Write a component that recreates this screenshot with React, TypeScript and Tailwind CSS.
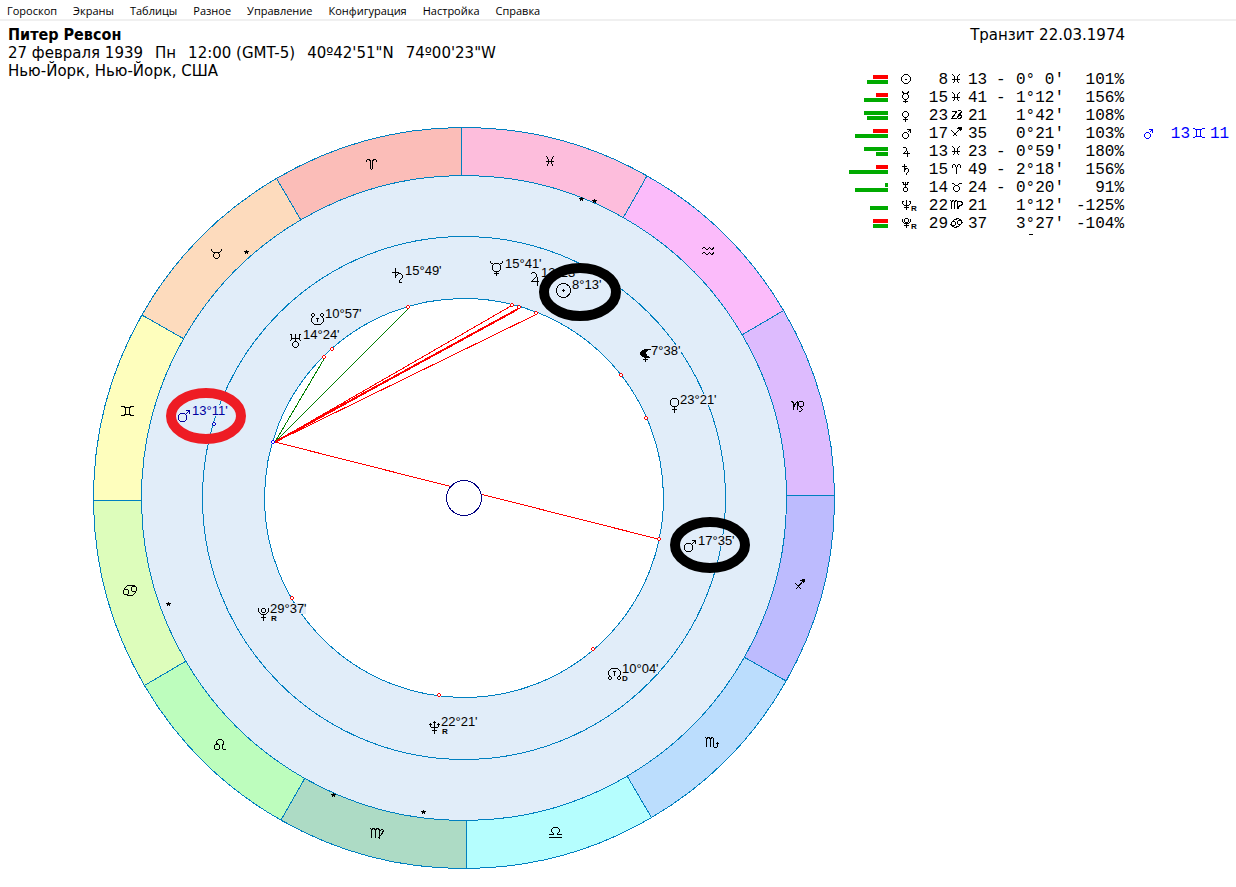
import type { ReactNode } from "react";

const MENU = ["Гороскоп", "Экраны", "Таблицы", "Разное", "Управление", "Конфигурация", "Настройка", "Справка"];

const CX = 464;
const CY = 498;
const R_OUTER = 370.5;
const R_SIGNS = 322.5;
const R_TRANSIT = 261.5;
const R_NATAL = 199.5;
// angle of the Pisces / Aries boundary
const ARIES_START = 90.4;

// eight-sided ring, keeps small glyph circles closed on the pixel grid
function ring(cx: number, cy: number, r: number) {
  const cut = Math.max(1, Math.round(r * 0.55));
  const c = r - cut;
  return `M${cx - c} ${cy - r}h${2 * c}l${cut} ${cut}v${2 * c}l${-cut} ${cut}h${-2 * c}l${-cut} ${-cut}v${-2 * c}Z`;
}

function polar(radius: number, degrees: number) {
  const a = (degrees * Math.PI) / 180;
  return `${(CX + radius * Math.cos(a)).toFixed(2)} ${(CY - radius * Math.sin(a)).toFixed(2)}`;
}

function sectorPath(index: number) {
  const from = ARIES_START + index * 30;
  const to = from + 30;
  return [
    `M${polar(R_OUTER, from)}`,
    `A${R_OUTER} ${R_OUTER} 0 0 0 ${polar(R_OUTER, to)}`,
    `L${polar(R_SIGNS, to)}`,
    `A${R_SIGNS} ${R_SIGNS} 0 0 1 ${polar(R_SIGNS, from)}Z`,
  ].join("");
}

const SECTORS = [
  { id: "aries", fill: "#fbbdb8", x: 366, y: 159, d: "M.5 3V1.5L1.5.5H3.5L4.5 2.5V9.5L5.5 10.5L6.5 9.5V2.5L7.5.5H9.5L10.5 1.5V3" },
  { id: "taurus", fill: "#fddbbd", x: 211, y: 249, d: `M.5 0V1.5L2.5 3.5H8.5L10.5 1.5V0${ring(5.5, 6.5, 3)}` },
  { id: "gemini", fill: "#fefebd", x: 121, y: 406, d: "M0 .5H2.5L4.5 1.5H8.5L10.5.5H13M0 9.5H2.5L4.5 8.5H8.5L10.5 9.5H13M4.5 1.5V8.5M8.5 1.5V8.5" },
  { id: "cancer", fill: "#ddfdbb", x: 123, y: 585, d: `${ring(3, 7, 2.5)}${ring(11, 4, 2.5)}M1.5 4.5V3.5L4.5.5H11.5M12.5 6.5V7.5L9.5 10.5H3.5` },
  { id: "leo", fill: "#bdfdbd", x: 214, y: 739, d: `${ring(3, 8, 2.5)}M4.5 5.5L2.5 4.5V2.5L4.5.5H7.5L9.5 2.5V4.5L8.5 6.5V9.5L9.5 10.5H12` },
  { id: "virgo", fill: "#addbc5", x: 370, y: 828, d: "M.5.5L1.5 1.5V10M1.5 1.5L3.5.5L5.5 1.5V10M5.5 1.5L7.5.5L9.5 1.5V11M9.5 3.5L11.5 1.5H12.5L13.5 2.5L11.5 6.5L7.5 10.5" },
  { id: "libra", fill: "#b5fefe", x: 549, y: 827, d: "M0 10.5H13M0 7.5H4.5V6.5L2.5 4.5V2.5L4.5.5H8.5L10.5 2.5V4.5L8.5 6.5V7.5H13" },
  { id: "scorpio", fill: "#bbddfd", x: 705, y: 737, d: "M.5.5L1.5 1.5V10M1.5 1.5L3.5.5L5.5 1.5V10M5.5 1.5L7.5.5L8.5 1.5V9.5L9.5 10.5H11.5L12.5 9.5V6M10.5 7.5L12.5 5.5L14.5 7.5" },
  { id: "sagittarius", fill: "#bdbbfe", x: 794, y: 579, d: "M1.5 10.5L10.5.5M1.5 4.5L7.5 10.5M6.5 1.5L10.5.5L9.5 4.5M7.5 1.5L9.5 3.5M8.5.5L10.5 2.5" },
  { id: "capricorn", fill: "#ddbbfe", x: 791, y: 401, d: `M0 .5H1.5L2.5 2.5V9M2.5 6.5L4.5 2.5L6.5.5V9${ring(10, 3, 2.5)}M8.5 5.5L11.5 8.5L9.5 10.5H8` },
  { id: "aquarius", fill: "#fbbbfa", x: 701, y: 247, d: "M.5 2.5L2.5.5H3.5L5.5 2.5H6.5L8.5.5L10.5 2.5H11.5L12.5.5M.5 7.5L2.5 5.5H3.5L5.5 7.5H6.5L8.5 5.5L10.5 7.5H11.5L12.5 5.5" },
  { id: "pisces", fill: "#fdbddc", x: 546, y: 156, d: "M.5.5L2.5 3.5V7.5L.5 10.5M7.5.5L5.5 3.5V7.5L7.5 10.5M0 5.5H8" },
];

const MARS = `${ring(4.5, 7.5, 4)}M7.5 4.5L11.5.5M8 .5H12M11.5 0V4`;

type Body = {
  name: string;
  x: number;
  y: number;
  d: string;
  solid?: string;
  label: string;
  lx: number;
  ly: number;
  mark?: string;
  mx?: number;
  my?: number;
  color?: string;
};

const BODIES: Body[] = [
  { name: "saturn", x: 392, y: 268, d: "M3.5 0V10M0 4.5H7M3.5 8.5L6.5 5.5H8.5L10.5 7.5V9.5L7.5 12.5V14.5H9.5", label: "15°49'", lx: 405, ly: 275 },
  { name: "south node", x: 311, y: 313, d: `${ring(2, 2, 1.5)}${ring(11, 2, 1.5)}M2.5 3.5L.5 5.5V8.5L3.5 11.5H9.5L12.5 8.5V5.5L10.5 3.5M5 5.5H8M6.5 5V9`, label: "10°57'", lx: 325, ly: 318 },
  { name: "uranus", x: 290, y: 334, d: `M0 .5H1.5V5.5L0 6.5M11 .5H9.5V5.5L11 6.5M1.5 4.5H9.5M5.5 0V8${ring(5.5, 10.5, 3)}`, label: "14°24'", lx: 303, ly: 339 },
  { name: "mercury", x: 490, y: 261, d: `M.5 0V1.5L3.5 3.5M12.5 0V1.5L9.5 3.5${ring(6.5, 6.5, 4)}M6.5 10.5V15M4 12.5H9`, label: "15°41'", lx: 505, ly: 268 },
  { name: "jupiter", x: 530, y: 272, d: "M.5 2.5L2.5.5H4.5L6.5 2.5V4.5L1.5 9.5H9M7.5 4.5V13.5", label: "13°23'", lx: 541, ly: 277 },
  { name: "sun", x: 556, y: 283, d: "M.5 7.5a7 7 0 1 0 14 0a7 7 0 1 0-14 0M6 7.5H9M7.5 6V9", label: "8°13'", lx: 572, ly: 289 },
  { name: "lilith", x: 640, y: 348, d: "M5.5 9V14M3 11.5H8", solid: "M10.5.5H5L2 2.5L0 4V7L4 9.5L9.5 10V9L7 7.5L6 5L7.5 2.5L10.5 1.5Z", label: "7°38'", lx: 651, ly: 355 },
  { name: "venus", x: 670, y: 398, d: `${ring(4.5, 4.5, 4)}M4.5 8.5V15M2 11.5H7`, label: "23°21'", lx: 680, ly: 404 },
  { name: "transit mars", x: 178, y: 410, d: MARS, label: "13°11'", lx: 192, ly: 415, color: "#0000a0" },
  { name: "mars", x: 684, y: 540, d: MARS, label: "17°35'", lx: 698, ly: 545 },
  { name: "neptune", x: 429, y: 721, d: "M1.5 2V5.5L2.5 6.5H8.5L9.5 5.5V2M5.5 0V13M3 9.5H8M4 1.5H7M0 3.5H3M8 3.5H11", label: "22°21'", lx: 441, ly: 726, mark: "R", mx: 442, my: 734 },
  { name: "pluto", x: 258, y: 607, d: `${ring(5.5, 3.5, 2)}M.5 1V4.5L3.5 7.5H7.5L10.5 4.5V1M5.5 7.5V14M3 10.5H8`, label: "29°37'", lx: 270, ly: 613, mark: "R", mx: 271, my: 621 },
  { name: "north node", x: 608, y: 668, d: `${ring(2, 10, 1.5)}${ring(11, 10, 1.5)}M2.5 8.5L.5 6.5V3.5L3.5.5H9.5L12.5 3.5V6.5L10.5 8.5M5 3.5H8M6.5 3V8`, label: "10°04'", lx: 622, ly: 673, mark: "D", mx: 622, my: 681 },
];

const POINTS = [
  [408, 307], [332, 349], [324, 357], [512, 305], [519, 307], [536, 313],
  [621, 375], [646, 418], [659, 539], [593, 649], [439, 695], [292, 598],
];

const ASPECTS = [
  { x: 324, y: 359, color: "#008000", width: 1 },
  { x: 408, y: 309, color: "#008000", width: 1 },
  { x: 511, y: 306, color: "#ff0000", width: 1 },
  { x: 518, y: 309, color: "#ff0000", width: 2 },
  { x: 535, y: 315, color: "#ff0000", width: 1 },
  { x: 658, y: 539, color: "#ff0000", width: 1 },
];

const STARS = [[246, 252], [581, 199], [594, 201], [168, 604], [333, 795], [423, 812]];

function Marker({ x, y, stroke, fill = "#fff" }: { x: number; y: number; stroke: string; fill?: string }) {
  return (
    <g transform={`translate(${x} ${y})`}>
      <rect x={-1} y={-1} width={2} height={2} fill={fill} />
      <path d="M-1-1.5H1M-1 1.5H1M-1.5-1V1M1.5-1V1" stroke={stroke} />
    </g>
  );
}

function NatalChart() {
  return (
    <svg
      className="block h-auto w-full"
      viewBox="0 80 840 800"
      role="img"
      aria-label="Натальная карта"
      fill="none"
      shapeRendering="crispEdges"
    >
      <circle cx={CX} cy={CY} r={R_SIGNS} fill="#e1edf9" />
      {SECTORS.map((sector, i) => (
        <path key={sector.id} d={sectorPath(i)} fill={sector.fill} stroke="#0080c0" />
      ))}
      <circle cx={CX} cy={CY} r={R_TRANSIT} stroke="#0080c0" />
      <circle cx={CX} cy={CY} r={R_NATAL} fill="#fff" stroke="#0080c0" />

      {ASPECTS.map((a) => (
        <line key={a.x} x1={275} y1={442} x2={a.x} y2={a.y} stroke={a.color} strokeWidth={a.width} />
      ))}
      <circle cx={CX} cy={CY} r={17.5} fill="#fff" stroke="#000080" />

      {SECTORS.map((s) => (
        <path key={s.id} d={s.d} transform={`translate(${s.x} ${s.y})`} stroke="#000" />
      ))}
      {STARS.map(([x, y]) => (
        <path key={x} d="M.5-2V1M-2-.5H3M.5 0L-1.5 2.5M.5 0L2.5 2.5" transform={`translate(${x} ${y})`} stroke="#000" />
      ))}

      {BODIES.map((b) => (
        <g key={b.name}>
          <rect x={b.lx} y={b.ly - 10} width={b.label.length * 6} height={11} fill="#e1edf9" />
          <path d={b.d} transform={`translate(${b.x} ${b.y})`} stroke={b.color ?? "#000"} />
          {b.solid && <path d={b.solid} transform={`translate(${b.x} ${b.y})`} fill="#000" />}
          <text className="font-['Liberation_Sans',sans-serif] text-[13px]" x={b.lx} y={b.ly} fill={b.color ?? "#000"}>
            {b.label}
          </text>
          {b.mark && (
            <text className="font-['Liberation_Sans',sans-serif] text-[8px] font-bold" x={b.mx} y={b.my} fill="#000">
              {b.mark}
            </text>
          )}
        </g>
      ))}

      {POINTS.map(([x, y]) => (
        <Marker key={x} x={x} y={y} stroke="#ff0000" />
      ))}
      <Marker x={273} y={442} stroke="#0000ff" />
      <Marker x={214} y={424} stroke="#0000c0" fill="#e1edf9" />

      <g strokeWidth={10} shapeRendering="auto">
        <ellipse cx={580} cy={292} rx={36} ry={24} stroke="#000" />
        <ellipse cx={710} cy={545} rx={35} ry={23} stroke="#000" />
        <ellipse cx={206} cy={416} rx={35} ry={23} stroke="#ee1c24" />
      </g>
    </svg>
  );
}

// compact glyphs for the table, drawn in a 14x12 box
const SMALL: Record<string, string> = {
  sun: "M5.5 1.5H8.5L11.5 4.5V7.5L8.5 10.5H5.5L2.5 7.5V4.5ZM6 6.5H8",
  mercury: `M3.5 0V1.5L5.5 2.5H7.5L9.5 1.5V0${ring(6.5, 5.5, 3)}M6.5 8.5V12M4 10.5H9`,
  venus: `${ring(6.5, 5.5, 3)}M6.5 8.5V13M4 10.5H9`,
  mars: `${ring(6.5, 8.5, 3)}M8.5 5.5L11.5 2.5M8 2.5H12M11.5 2V6`,
  jupiter: "M3.5 3.5L4.5 2.5H6.5L7.5 3.5V5.5L4.5 8.5H11M8.5 6V12",
  saturn: "M5.5 1V9M3 3.5H8M5.5 6.5L7.5 5.5H8.5L9.5 6.5V8.5L7.5 10.5V12",
  uranus: `M3 1.5H5M8 1.5H10M4.5 1V4M8.5 1V4M4 3.5H9M6.5 1V6${ring(6.5, 8.5, 2)}`,
  neptune: "M3 2.5H5M10 2.5H12M3.5 2V4.5L5.5 6.5H9.5L11.5 4.5V2M7.5 1V11M5 8.5H10",
  pluto: `${ring(7.5, 3.5, 2)}M3.5 2V4.5L5.5 6.5H9.5L11.5 4.5V2M7.5 6.5V11M5 8.5H10`,
  pisces: "M3.5 1.5L5.5 3.5V8.5L3.5 10.5M10.5 1.5L8.5 3.5V8.5L10.5 10.5M3 6.5H11",
  capricorn: "M3 2.5H7.5L6.5 4.5L2.5 9.5H7.5L12.5 3.5M8.5 2.5L9.5 1.5H11.5L12.5 2.5L9.5 5.5H11.5L12.5 7.5L11.5 9.5H8.5",
  sagittarius: "M3.5 9.5L12.5.5M2.5 3.5L8.5 9.5M8.5 1.5L12.5.5L11.5 4.5M9.5.5L12.5 3.5",
  aries: "M3.5 4.5V2.5L4.5 1.5H5.5L7.5 4.5V11M11.5 4.5V2.5L10.5 1.5H9.5L7.5 4.5",
  taurus: `M2.5 2.5H4.5L6.5 4.5H8.5L10.5 2.5H12.5${ring(7.5, 7.5, 3)}`,
  virgo: "M1.5 1.5L2.5 2.5V10M2.5 2.5L4.5 1.5L5.5 2.5V10M5.5 2.5L7.5 1.5L8.5 2.5V10M8.5 2.5H12.5L13.5 4.5L12.5 6.5H10.5L8.5 10.5",
  cancer: `${ring(4.5, 6.5, 2)}${ring(10.5, 5.5, 2)}M1.5 6.5L5.5 2.5L9.5 1.5L13.5 4.5M13.5 5.5L9.5 9.5L5.5 10.5L1.5 7.5`,
  gemini: "M1.5 1.5H3.5L4.5 2.5H10.5L11.5 1.5H13.5M1.5 10.5H3.5L4.5 9.5H10.5L11.5 10.5H13.5M5.5 2.5V9.5M9.5 2.5V9.5",
};

function SmallGlyph({ id, retrograde }: { id: string; retrograde?: boolean }) {
  return (
    <svg className="block h-3 w-5" viewBox="0 0 20 12" overflow="visible" fill="none" shapeRendering="crispEdges" aria-hidden="true">
      <path d={SMALL[id]} stroke="currentColor" />
      {retrograde && (
        <text className="font-['Liberation_Sans',sans-serif] text-[8px] font-bold" x={12} y={12} fill="currentColor">
          R
        </text>
      )}
    </svg>
  );
}

const ROWS = [
  { planet: "sun", deg: "8", sign: "pisces", min: "13", dir: "-", speed: "0° 0'", pct: "101%", top: -15, bottom: 21 },
  { planet: "mercury", deg: "15", sign: "pisces", min: "41", dir: "-", speed: "1°12'", pct: "156%", top: -12, bottom: 24 },
  { planet: "venus", deg: "23", sign: "capricorn", min: "21", dir: "", speed: "1°42'", pct: "108%", top: 24, bottom: 21 },
  { planet: "mars", deg: "17", sign: "sagittarius", min: "35", dir: "", speed: "0°21'", pct: "103%", top: -15, bottom: 33, transit: { deg: "13", sign: "gemini", min: "11" } },
  { planet: "jupiter", deg: "13", sign: "pisces", min: "23", dir: "-", speed: "0°59'", pct: "180%", top: 24, bottom: 12 },
  { planet: "saturn", deg: "15", sign: "aries", min: "49", dir: "-", speed: "2°18'", pct: "156%", top: -12, bottom: 39 },
  { planet: "uranus", deg: "14", sign: "taurus", min: "24", dir: "-", speed: "0°20'", pct: "91%", top: 3, bottom: 33 },
  { planet: "neptune", deg: "22", sign: "virgo", min: "21", dir: "", speed: "1°12'", pct: "-125%", top: 0, bottom: 18, retrograde: true },
  { planet: "pluto", deg: "29", sign: "cancer", min: "37", dir: "", speed: "3°27'", pct: "-104%", top: -15, bottom: 15, retrograde: true },
];

function Cell({ className = "", children }: { className?: string; children?: ReactNode }) {
  return <td className={`h-[18px] p-0 ${className}`}>{children}</td>;
}

function TextCell({ className = "", children }: { className?: string; children?: ReactNode }) {
  return <td className={`h-[18px] pt-0.5 leading-4 ${className}`}>{children}</td>;
}

function Strength({ top, bottom }: { top: number; bottom: number }) {
  return (
    <div className="flex flex-col items-end gap-px">
      <div className={`h-1 ${top < 0 ? "bg-[#ff0000]" : "bg-[#00aa00]"}`} style={{ width: Math.abs(top) }} />
      <div className="h-1 bg-[#00aa00]" style={{ width: bottom }} />
    </div>
  );
}

function PositionsTable() {
  return (
    <table className="ml-2 w-[384px] table-fixed border-collapse font-['Liberation_Mono',monospace] text-[16px]">
      <colgroup>
        <col className="w-10" />
        <col className="w-9" />
        <col className="w-6" />
        <col className="w-[19px]" />
        <col className="w-[25px]" />
        <col className="w-6" />
        <col className="w-[54px]" />
        <col className="w-[54px]" />
        <col className="w-[42px]" />
        <col className="w-6" />
        <col className="w-[19px]" />
        <col />
      </colgroup>
      <tbody>
        {ROWS.map((row) => (
          <tr key={row.planet}>
            <Cell>
              <Strength top={row.top} bottom={row.bottom} />
            </Cell>
            <Cell className="pl-[11px]">
              <SmallGlyph id={row.planet} retrograde={row.retrograde} />
            </Cell>
            <TextCell className="text-right">{row.deg}</TextCell>
            <Cell className="pl-px">
              <SmallGlyph id={row.sign} />
            </Cell>
            <TextCell className="pl-px">{row.min}</TextCell>
            <TextCell className="pl-1">{row.dir}</TextCell>
            <TextCell className="whitespace-pre">{row.speed}</TextCell>
            <TextCell className="text-right">{row.pct}</TextCell>
            <Cell className="pl-[17px] text-[#0000ff]">{row.transit && <SmallGlyph id={row.planet} />}</Cell>
            <TextCell className="text-right text-[#0000ff]">{row.transit?.deg}</TextCell>
            <Cell className="pl-px text-[#0000ff]">{row.transit && <SmallGlyph id={row.transit.sign} />}</Cell>
            <TextCell className="pl-px text-[#0000ff]">{row.transit?.min}</TextCell>
          </tr>
        ))}
      </tbody>
    </table>
  );
}

export default function App() {
  return (
    <div className="min-h-screen bg-white text-black">
      <nav className="flex h-[21px] items-end gap-4 border-b-2 border-[#f0f0f0] pl-[7px] font-['Open_Sans',sans-serif] text-[11px]">
        {MENU.map((item) => (
          <button key={item} type="button" className="leading-4">
            {item}
          </button>
        ))}
      </nav>

      <main className="flex items-start font-['DejaVu_Sans',sans-serif] text-[15px] leading-[18px]">
        <section className="min-w-0 flex-1">
          <header className="h-[59px] pt-[5px] pl-2 whitespace-nowrap">
            <h1 className="font-['DejaVu_Sans_Condensed','DejaVu_Sans',sans-serif] text-[16px] leading-[18px] font-bold">
              Питер Ревсон
            </h1>
            <p className="flex gap-3">
              <span>27 февраля 1939</span>
              <span>Пн</span>
              <span>12:00 (GMT-5)</span>
              <span>40º42'51"N</span>
              <span>74º00'23"W</span>
            </p>
            <p>Нью-Йорк, Нью-Йорк, США</p>
          </header>
          <NatalChart />
        </section>

        <aside className="w-[396px] shrink-0 pt-[5px]">
          <h2 className="mb-[26px] pr-[111px] text-right">Транзит 22.03.1974</h2>
          <PositionsTable />
          <div className="mt-[2px] ml-[189px] h-px w-1 bg-black" />
        </aside>
      </main>
    </div>
  );
}
